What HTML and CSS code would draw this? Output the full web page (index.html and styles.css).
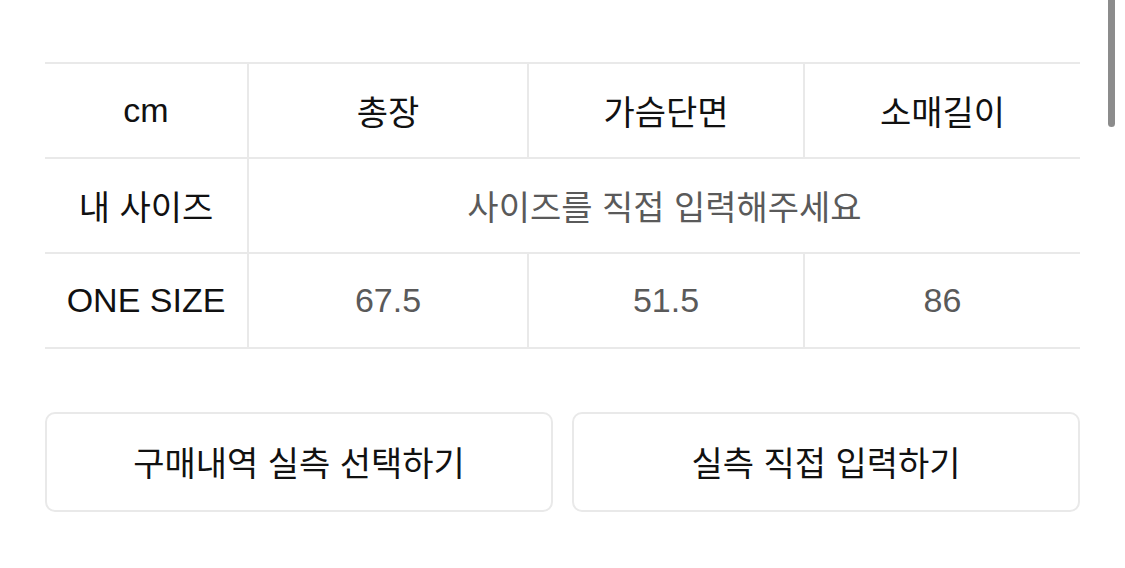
FILE: index.html
```html
<!DOCTYPE html>
<html lang="ko">
<head>
<meta charset="utf-8">
<link rel="stylesheet" href="styles.css">
</head>
<body>
<div class="page">
  <div class="size-table">
    <div class="cell head label">cm</div>
    <div class="cell head">총장</div>
    <div class="cell head">가슴단면</div>
    <div class="cell head">소매길이</div>

    <div class="cell head label">내 사이즈</div>
    <div class="cell value span3">사이즈를 직접 입력해주세요</div>

    <div class="cell head label">ONE SIZE</div>
    <div class="cell value">67.5</div>
    <div class="cell value">51.5</div>
    <div class="cell value">86</div>
  </div>
  <div class="actions">
    <button class="btn">구매내역 실측 선택하기</button>
    <button class="btn">실측 직접 입력하기</button>
  </div>
</div>
<div class="scrollbar"></div>
</body>
</html>
```

FILE: styles.css
```css
html, body {
  margin: 0;
  padding: 0;
  background: #fff;
}
body {
  font-family: "Liberation Sans", "Noto Sans CJK KR", sans-serif;
  overflow: hidden;
}
.page {
  padding: 62px 45px 0 45px;
}
.size-table {
  display: grid;
  grid-template-columns: 202px 280px 276px 1fr;
  border-top: 2px solid #e9e9e9;
}
.cell {
  display: flex;
  align-items: center;
  justify-content: center;
  border-bottom: 2px solid #e9e9e9;
  border-left: 2px solid #e9e9e9;
  font-size: 34px;
  box-sizing: border-box;
  height: 95px;
}
.cell.label {
  border-left: none;
}
.head {
  color: #111;
}
.value {
  color: #5a5a5a;
}
.span3 {
  grid-column: span 3;
}
.actions {
  display: flex;
  gap: 19px;
  margin-top: 63px;
}
.btn {
  flex: 1;
  height: 100px;
  background: #fff;
  border: 2px solid #e9e9e9;
  border-radius: 10px;
  font-family: "Liberation Sans", "Noto Sans CJK KR", sans-serif;
  font-size: 34px;
  color: #111;
  padding: 0 0 2px 0;
}
.scrollbar {
  position: absolute;
  top: 0;
  left: 1108px;
  width: 7px;
  height: 127px;
  background: #8c8c8c;
  border-radius: 0 0 4px 4px;
}
```
